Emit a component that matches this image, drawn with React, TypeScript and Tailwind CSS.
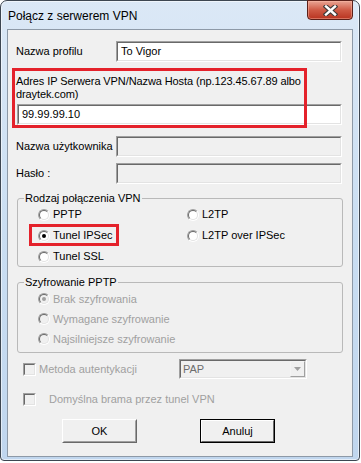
import clsx from "clsx";
import type { ReactNode } from "react";

const sunken = "border border-t-[#a0a0a0] border-l-[#a0a0a0] border-b-white border-r-white";
const sunkenInner = "border border-t-[#696969] border-l-[#696969] border-b-[#e3e3e3] border-r-[#e3e3e3]";

function TextBox({ value, disabled, className }: { value?: string; disabled?: boolean; className?: string }) {
  return (
    <div className={clsx("h-[21px]", sunken, className)}>
      <div className={clsx("flex h-full items-center pl-[3px]", sunkenInner, disabled ? "bg-[#f0f0f0]" : "bg-white")}>
        {value}
      </div>
    </div>
  );
}

function Radio({ checked, disabled }: { checked?: boolean; disabled?: boolean }) {
  return (
    <span className={clsx("block h-[12px] w-[12px] shrink-0 rounded-full", sunken)}>
      <span
        className={clsx(
          "flex h-full w-full items-center justify-center rounded-full",
          sunkenInner,
          disabled ? "bg-[#f0f0f0]" : "bg-white"
        )}
      >
        {checked && <span className={clsx("h-[4px] w-[4px] rounded-full", disabled ? "bg-[#a0a0a0]" : "bg-black")} />}
      </span>
    </span>
  );
}

function RadioItem({ label, checked, disabled }: { label: string; checked?: boolean; disabled?: boolean }) {
  return (
    <div className="flex items-center gap-[3px]">
      <Radio checked={checked} disabled={disabled} />
      <span className={disabled ? "text-[#a0a0a0]" : "text-black"}>{label}</span>
    </div>
  );
}

function CheckBox() {
  return (
    <span className={clsx("block h-[13px] w-[13px] shrink-0", sunken)}>
      <span className={clsx("block h-full w-full bg-[#f0f0f0]", sunkenInner)} />
    </span>
  );
}

function Group({ title, className, children }: { title: string; className?: string; children: ReactNode }) {
  return (
    <fieldset className={clsx("ml-[9px] w-[326px] rounded-[3px] border border-[#b9b9b9]", className)}>
      <legend className="ml-[6px] px-[1px] leading-[13px]">{title}</legend>
      {children}
    </fieldset>
  );
}

function Button({ label, isDefault }: { label: string; isDefault?: boolean }) {
  return (
    <button
      className={clsx(
        "h-[24px] w-[75px] border bg-[#f0f0f0]",
        isDefault ? "border-black" : "border-t-white border-l-white border-b-[#696969] border-r-[#696969]"
      )}
    >
      <span
        className={clsx(
          "flex h-full w-full items-center justify-center border",
          isDefault
            ? "border-t-white border-l-white border-b-[#696969] border-r-[#696969]"
            : "border-t-[#f0f0f0] border-l-[#f0f0f0] border-b-[#a0a0a0] border-r-[#a0a0a0]"
        )}
      >
        {label}
      </span>
    </button>
  );
}

export default function App() {
  return (
    <div className="relative h-[463px] w-[361px] bg-white font-['Liberation_Sans',Arial,sans-serif] text-[11px] leading-[13px] text-black">
      <div className="flex h-[461px] w-[360px] flex-col rounded-t-[7px] rounded-b-[4px] border border-[#3d4651] bg-gradient-to-b from-[#dbe8f6] via-[#cadef2] to-[#c0d6ee] px-[6px] pb-[3px] shadow-[inset_0_0_0_1px_rgba(255,255,255,0.55)]">
        {/* title bar */}
        <div className="flex h-[28px] shrink-0 items-start">
          <span className="pl-[1px] pt-[7px] text-[12px] leading-[16px]">Połącz z serwerem VPN</span>
          <div className="-mt-[1px] ml-auto flex h-[20px] w-[46px] items-center justify-center rounded-b-[4px] border border-[#5b2019] bg-gradient-to-b from-[#e8a494] via-[#cf5a45] to-[#b8321f] shadow-[inset_0_0_0_1px_rgba(255,190,170,0.45)]">
            <svg width="15" height="11" viewBox="0 0 15 11">
              <path d="M3 1.5 L12 9.5 M12 1.5 L3 9.5" stroke="#3f3a3a" strokeWidth="4.6" strokeLinecap="square" />
              <path d="M3 1.5 L12 9.5 M12 1.5 L3 9.5" stroke="#ffffff" strokeWidth="2.4" strokeLinecap="square" />
            </svg>
          </div>
        </div>

        {/* client area */}
        <div className="flex-1 border border-[#8d99a7] bg-[#f0f0f0]">
          <div className="mt-[11px] flex items-center pl-[8px]">
            <span className="w-[100px]">Nazwa profilu</span>
            <TextBox value="To Vigor" className="w-[226px]" />
          </div>

          <p className="mt-[13px] pl-[8px] tracking-[-0.1px]">
            Adres IP Serwera VPN/Nazwa Hosta (np.123.45.67.89 albo
            <br />
            draytek.com)
          </p>
          <TextBox value="99.99.99.10" className="ml-[9px] mt-[3px] w-[325px]" />

          <div className="mt-[11px] flex items-center pl-[8px]">
            <span className="w-[100px]">Nazwa użytkownika</span>
            <TextBox disabled className="w-[226px]" />
          </div>
          <div className="mt-[6px] flex items-center pl-[8px]">
            <span className="w-[100px]">Hasło :</span>
            <TextBox disabled className="w-[226px]" />
          </div>

          <Group title="Rodzaj połączenia VPN" className="mt-[8px] h-[75px]">
            <div className="-mt-[1px] grid auto-rows-[21px] grid-cols-[149px_1fr] items-center pl-[20px]">
              <RadioItem label="PPTP" />
              <RadioItem label="L2TP" />
              <RadioItem label="Tunel IPSec" checked />
              <RadioItem label="L2TP over IPSec" />
              <RadioItem label="Tunel SSL" />
            </div>
          </Group>

          <Group title="Szyfrowanie PPTP" className="mt-[9px] h-[77px]">
            <div className="grid auto-rows-[20px] items-center pl-[20px]">
              <RadioItem label="Brak szyfrowania" checked disabled />
              <RadioItem label="Wymagane szyfrowanie" disabled />
              <RadioItem label="Najsilniejsze szyfrowanie" disabled />
            </div>
          </Group>

          <div className="mt-[6px] flex h-[20px] items-center pl-[15px]">
            <div className="flex w-[156px] items-center gap-[3px]">
              <CheckBox />
              <span className="text-[#a0a0a0]">Metoda autentykacji</span>
            </div>
            <div className={clsx("h-[20px] w-[128px]", sunken)}>
              <div className={clsx("flex h-full items-center bg-[#f0f0f0]", sunkenInner)}>
                <span className="flex-1 pl-[2px] text-[#6d6d6d]">PAP</span>
                <span className="flex h-full w-[15px] items-center justify-center border border-t-[#f4f4f4] border-l-[#f4f4f4] border-b-[#a0a0a0] border-r-[#a0a0a0] bg-[#f0f0f0]">
                  <svg width="7" height="4" viewBox="0 0 7 4">
                    <path d="M0 0 H7 L3.5 4 Z" fill="#a0a0a0" />
                  </svg>
                </span>
              </div>
            </div>
          </div>

          <div className="mt-[12px] flex h-[16px] items-center gap-[13px] pl-[15px]">
            <CheckBox />
            <span className="text-[#a0a0a0]">Domyślna brama przez tunel VPN</span>
          </div>

          <div className="mt-[12px] flex gap-[63px] pl-[54px]">
            <Button label="OK" />
            <Button label="Anuluj" isDefault />
          </div>
        </div>
      </div>

      {/* red annotation frames */}
      <div className="pointer-events-none absolute left-[12px] top-[68px] h-[60px] w-[295px] border-[3px] border-[#e4222b]" />
      <div className="pointer-events-none absolute left-[29px] top-[224px] h-[22px] w-[90px] border-[3px] border-[#e4222b]" />
    </div>
  );
}
